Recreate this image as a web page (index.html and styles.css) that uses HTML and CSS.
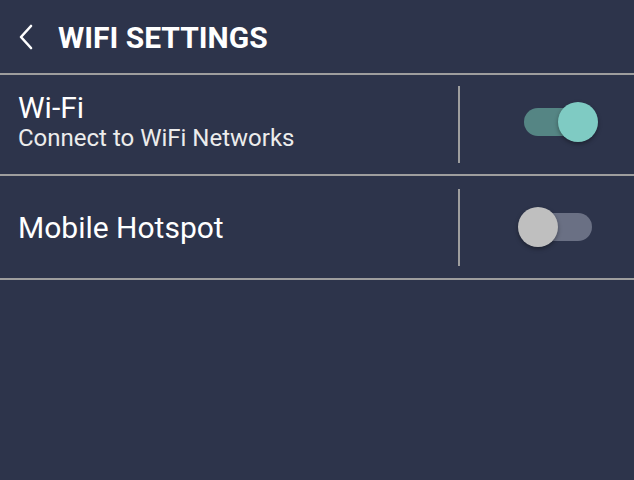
FILE: index.html
```html
<!DOCTYPE html>
<html lang="en">
<head>
    <meta charset="UTF-8">
    <meta name="viewport" content="width=device-width, initial-scale=1.0">
    <link rel="stylesheet" href="styles.css">
    <title>WiFi Settings</title>
</head>
<body>
    <div class="header">
        <svg class="back" width="16" height="26" viewBox="0 0 16 26">
            <polyline points="13,2 3,13 13,24" fill="none" stroke="#fff" stroke-width="2.6" stroke-linecap="round" stroke-linejoin="round"/>
        </svg>
        <h1>WIFI SETTINGS</h1>
    </div>

    <div class="row row-wifi">
        <div class="row-text">
            <div class="row-title">Wi-Fi</div>
            <div class="row-sub">Connect to WiFi Networks</div>
        </div>
        <div class="divider"></div>
        <div class="toggle-area">
            <div class="toggle on"><span class="knob"></span></div>
        </div>
    </div>

    <div class="row row-hotspot">
        <div class="row-text">
            <div class="row-title">Mobile Hotspot</div>
        </div>
        <div class="divider"></div>
        <div class="toggle-area">
            <div class="toggle"><span class="knob"></span></div>
        </div>
    </div>
</body>
</html>
```

FILE: styles.css
```css
body {
    margin: 0;
    height: 100vh;
    background-color: #2d344b;
    font-family: Roboto, 'Liberation Sans', sans-serif;
    color: #fff;
}

.header {
    display: flex;
    align-items: center;
    height: 73px;
    padding-left: 18px;
    border-bottom: 2px solid #9e9e9e;
}

.header .back {
    margin-right: 24px;
    margin-top: 1px;
}

.header h1 {
    margin: 2px 0 0;
    font-size: 30px;
    line-height: 34px;
    font-weight: 700;
}

.row {
    display: flex;
    align-items: center;
    border-bottom: 2px solid #9e9e9e;
}

.row-wifi {
    height: 99px;
}

.row-hotspot {
    height: 102px;
}

.row-text {
    flex: 1;
    padding-left: 18px;
}

.row-wifi .row-text {
    margin-top: -6px;
}

.row-hotspot .row-text {
    margin-top: 2px;
}

.row-title {
    font-size: 30px;
    line-height: 32px;
}

.row-sub {
    font-size: 24px;
    line-height: 28px;
    color: #ececec;
}

.divider {
    width: 2px;
    height: 77px;
    background-color: #9e9e9e;
}

.row-wifi .divider {
    margin-top: -1px;
}

.toggle-area {
    width: 132px;
    padding-right: 42px;
    display: flex;
    justify-content: flex-end;
}

.toggle {
    position: relative;
    width: 68px;
    height: 28px;
    border-radius: 14px;
    background-color: #6a7084;
}

.toggle .knob {
    position: absolute;
    top: -6px;
    left: -6px;
    width: 40px;
    height: 40px;
    border-radius: 50%;
    background-color: #bfbfbf;
    box-shadow: 0 2px 4px rgba(0, 0, 0, 0.35);
}

.toggle.on {
    background-color: #558584;
    margin-top: -5px;
}

.toggle.on .knob {
    left: 34px;
    background-color: #7fcbc3;
}
```
